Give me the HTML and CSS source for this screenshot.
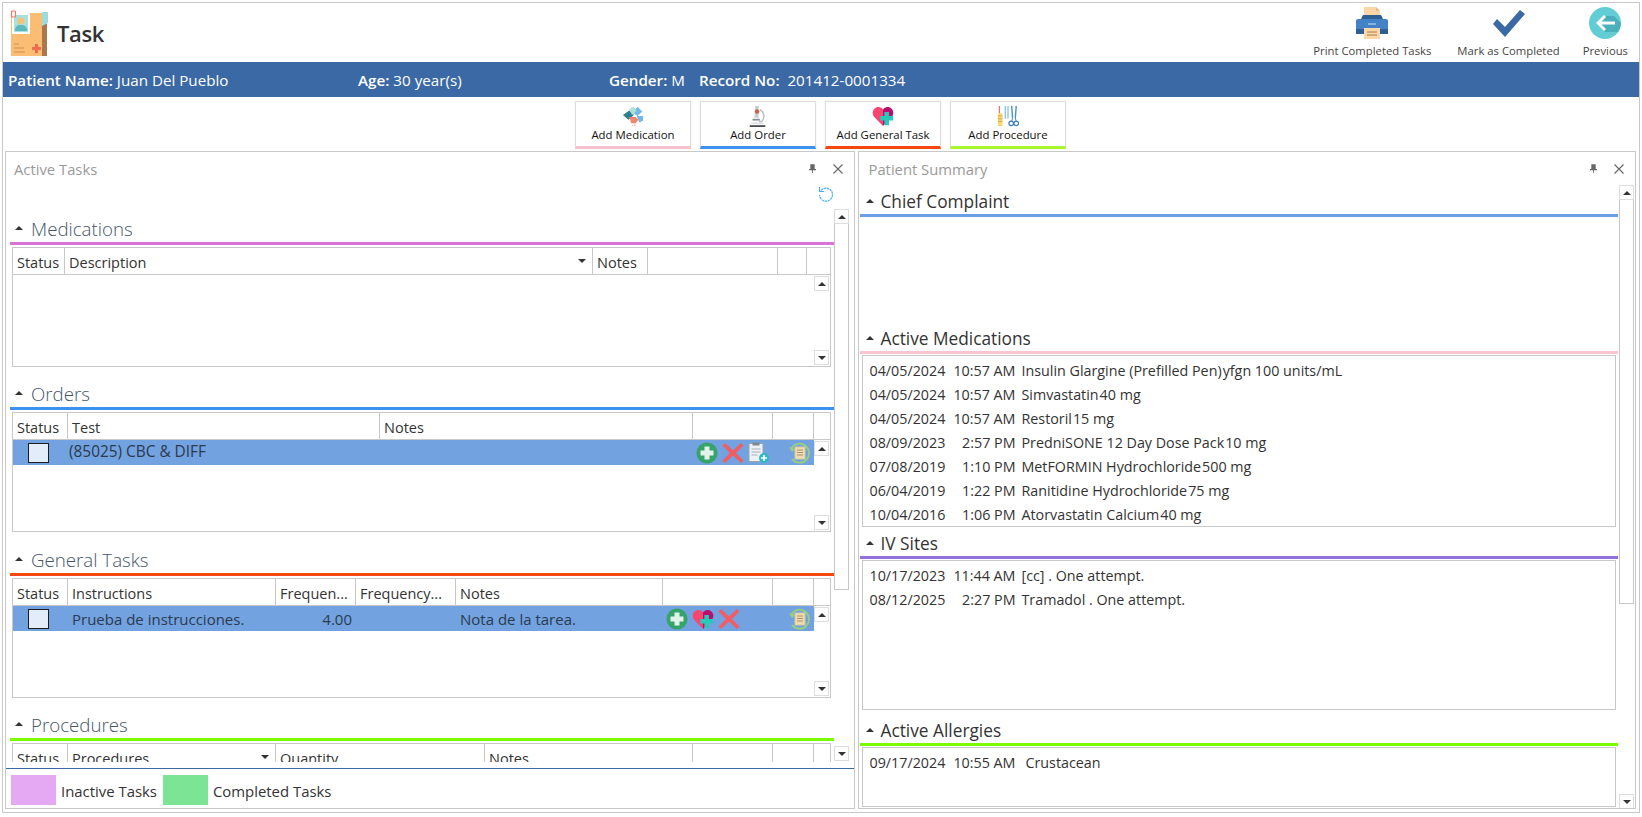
FILE: index.html
```html
<!DOCTYPE html>
<html lang="en">
<head>
<meta charset="utf-8">
<title>Task</title>
<link rel="stylesheet" href="styles.css">
</head>
<body>
<svg class="defs" width="0" height="0" aria-hidden="true">
  <defs>
    <symbol id="i-plus" viewBox="0 0 22 22">
      <circle cx="11" cy="11" r="10.500" fill="#35a36a"/>
      <path d="M8.500 4.500h5v4h4v5h-4v4h-5v-4h-4v-5h4z" fill="#e4f3ea"/>
    </symbol>
    <symbol id="i-x" viewBox="0 0 22 22">
      <path d="M3 1l8 7.500L19 1l2.500 2.500L14 11l7.500 7.500L19 21l-8-7.500L3 21 .5 18.500 8 11 .5 3.500z" fill="#f25c62"/>
    </symbol>
    <symbol id="i-clip" viewBox="0 0 22 22">
      <rect x="1" y="1.500" width="14" height="18" rx="1" fill="#eef1f5" stroke="#9aa3ad"/>
      <rect x="4.500" y=".5" width="7" height="3" fill="#7f8791"/>
      <path d="M3.500 7h9M3.500 10h9M3.500 13h6" stroke="#a7b0ba"/>
      <circle cx="16" cy="16" r="5" fill="#2fb9c4"/>
      <path d="M16 13v6M13 16h6" stroke="#fff" stroke-width="1.600"/>
    </symbol>
    <symbol id="i-hist" viewBox="0 0 22 22">
      <path d="M3 7a9.500 9.500 0 1 1 1 10" fill="none" stroke="#9bd07a" stroke-width="1.800"/>
      <path d="M1 5l3 5 3-3z" fill="#9bd07a"/>
      <rect x="7" y="5" width="10" height="12" fill="#f0dcae" stroke="#d8c9a5"/>
      <path d="M9 8h6M9 10.500h6M9 13h6" stroke="#a8946a"/>
    </symbol>
    <symbol id="i-heart" viewBox="0 0 24 24">
      <path d="M12 23L2.500 13C-.5 9.500.5 4 5 2.500c3-1 5.500 0 7 2.500z" fill="#f7466f"/>
      <path d="M12 23V5c1.500-2.500 4-3.500 7-2.500 4.500 1.500 5.500 7 2.500 10.500z" fill="#b80f6e"/>
      <path d="M13.500 7.500h5v4.500H23v5h-4.500v5h-5v-5H9v-5h4.500z" fill="#27c9b8"/>
    </symbol>
  </defs>
</svg>

<div class="app">
  <header class="topbar">
    <svg class="logo" viewBox="0 0 38 46" aria-hidden="true">
      <path d="M1 3h31v43H1z" fill="#fbbc74"/>
      <path d="M32 3h3v6l2-2v39h-5z" fill="#a9794b"/>
      <path d="M32 2h6v11l-6 3z" fill="#9fdcd8"/>
      <rect x="2" y="3" width="18" height="21" fill="#fff"/>
      <rect x="4" y="5" width="14" height="17" fill="#a8e0dd"/>
      <circle cx="11" cy="11" r="3.500" fill="#f3c27a"/>
      <path d="M5 21c0-5 2.500-6 6-6s6 1 6 6z" fill="#5cb8be"/>
      <rect x="1.500" y="1" width="4" height="6" rx="1" fill="#fff" stroke="#f2725e" stroke-width="1.200"/>
      <path d="M25 34h3v3h3v3h-3v3h-3v-3h-3v-3h3z" fill="#f26a50"/>
      <path d="M4 34h5M4 38h10M4 42h11" stroke="#c99355"/>
    </svg>
    <h1 class="title">Task</h1>
    <nav class="actions">
      <div class="action">
        <svg class="action-icon" viewBox="0 0 32 32" aria-hidden="true">
          <path d="M8 0h12l4 4v8H8z" fill="#fbd6a9"/>
          <path d="M20 0l4 4h-4z" fill="#e6bd8c"/>
          <path d="M7 8h18l2 4H5z" fill="#2d5f95"/>
          <path d="M2 12h28a2 2 0 0 1 2 2v11a2 2 0 0 1-2 2H2a2 2 0 0 1-2-2V14a2 2 0 0 1 2-2z" fill="#4482c6"/>
          <rect x="0" y="22" width="32" height="5" fill="#2d5f95"/>
          <path d="M8 21h16v11H8z" fill="#fbd6a9"/>
          <path d="M11 25h10M11 28h10" stroke="#a97f4d"/>
          <path d="M12 17h8" stroke="#cfe1f4"/>
        </svg>
        <span>Print Completed Tasks</span>
      </div>
      <div class="action">
        <svg class="action-icon" viewBox="0 0 32 32" aria-hidden="true">
          <path d="M0 17l4-5 8 8L27 3l5 4-20 23z" fill="#3a69a5"/>
        </svg>
        <span>Mark as Completed</span>
      </div>
      <div class="action action-prev">
        <svg class="action-icon" viewBox="0 0 32 32" aria-hidden="true">
          <circle cx="16" cy="16" r="16" fill="#63cdd6"/>
          <path d="M7 16l9 9h13a16 16 0 0 0 3-9l-7-7H16z" fill="#4bb0ba"/>
          <path d="M15 8l-8 8 8 8 2-2-4.500-4.500H26v-3H12.500L17 10z" fill="#fff"/>
        </svg>
        <span>Previous</span>
      </div>
    </nav>
  </header>

  <div class="patient">
    <div class="p-name"><b>Patient Name:</b> Juan Del Pueblo</div>
    <div class="p-age"><b>Age:</b> 30 year(s)</div>
    <div class="p-gender"><b>Gender:</b> M</div>
    <div class="p-rec"><b>Record No:</b>&nbsp; 201412-0001334</div>
  </div>

  <div class="adds">
    <button class="add add-pink" type="button">
      <svg class="add-icon" viewBox="0 0 24 24" aria-hidden="true">
        <path d="M11 8l6-6 5 5-5 5z" fill="#72b8e8"/>
        <path d="M1 11l7-5 5 5-6 5z" fill="#2e7f8f"/>
        <path d="M8 5l4-3 4 4-5 5z" fill="#a9e0d8"/>
        <path d="M8 13h7l3 3-3 4H10z" fill="#f3876d"/>
        <path d="M16 12h7v5l-4 2z" fill="#72b8e8"/>
        <path d="M14 21v2M11 22l1 1" stroke="#e79b85"/>
      </svg>
      <span>Add Medication</span>
    </button>
    <button class="add add-blue" type="button">
      <svg class="add-icon" viewBox="0 0 24 24" aria-hidden="true">
        <path d="M9 1h4v3h-1l1 10H8z" fill="#c9ccd2"/>
        <circle cx="11" cy="7" r="2.500" fill="#c4644f"/>
        <path d="M14 5a8 8 0 0 1 2 13h-3" fill="none" stroke="#b8bcc3" stroke-width="1.500"/>
        <path d="M6 15h8v2H6z" fill="#8a9099"/>
        <path d="M5 19h13v2H5z" fill="#dfe2e6"/>
        <path d="M3 22h17v2H3z" fill="#4b4f55"/>
      </svg>
      <span>Add Order</span>
    </button>
    <button class="add add-orange" type="button">
      <svg class="add-icon" aria-hidden="true"><use href="#i-heart"/></svg>
      <span>Add General Task</span>
    </button>
    <button class="add add-green" type="button">
      <svg class="add-icon" viewBox="0 0 24 24" aria-hidden="true">
        <path d="M2 1h1v8H2z" fill="#e8453c"/>
        <path d="M1 9h5v14H1z" fill="#f6d675"/>
        <path d="M1 12h5M1 15h5M1 18h5" stroke="#d8a93f"/>
        <path d="M9 1v14M12 1v14" stroke="#8cc8e8" stroke-width="1.500"/>
        <path d="M16 1l1 13M21 1l-1 13" stroke="#4a90c8" stroke-width="1.500"/>
        <circle cx="15.500" cy="20" r="2.500" fill="none" stroke="#3f7fb8" stroke-width="1.300"/>
        <circle cx="21" cy="20" r="2.500" fill="none" stroke="#3f7fb8" stroke-width="1.300"/>
        <path d="M17 14l-1 4M20 14l1 4" stroke="#3f7fb8"/>
      </svg>
      <span>Add Procedure</span>
    </button>
  </div>

  <main class="panels">
    <section class="panel panel-left">
      <div class="panel-head">
        <span class="panel-title">Active Tasks</span>
        <svg class="pin" viewBox="0 0 8 10" aria-hidden="true"><path d="M1.500 0h5v5.500H8V7H4.500v3h-1V7H0V5.500h1.500z" fill="#666"/></svg>
        <svg class="close" viewBox="0 0 10 10" aria-hidden="true"><path d="M.5.5l9 9M9.500.5l-9 9" stroke="#666" stroke-width="1.100"/></svg>
      </div>
      <div class="refresh-row">
        <svg class="refresh" viewBox="0 0 16 16" aria-hidden="true">
          <path d="M3 4.500A6.500 6.500 0 1 1 1.500 9" fill="none" stroke="#45b4ee" stroke-width="1.200" stroke-dasharray="2.500 .6"/>
          <path d="M1.500 1v4.500H6" fill="none" stroke="#45b4ee" stroke-width="1.200"/>
        </svg>
      </div>
      <div class="left-scroll">
        <div class="left-content">
          <div class="sec sec-first">
            <h2 class="sec-h"><i class="caret"></i>Medications</h2>
            <div class="rule rule-orchid"></div>
            <div class="grid">
              <div class="gh cols-med">
                <div>Status</div><div class="sorted">Description<i class="caret-down"></i></div><div>Notes</div><div></div><div></div><div></div>
              </div>
              <div class="gb">
                <div class="rows"></div>
                <div class="mini-sb"><span class="sb-btn"><i class="caret-s"></i></span><span class="sb-btn"><i class="caret-d"></i></span></div>
              </div>
            </div>
          </div>
          <div class="sec">
            <h2 class="sec-h"><i class="caret"></i>Orders</h2>
            <div class="rule rule-blue"></div>
            <div class="grid">
              <div class="gh cols-ord">
                <div>Status</div><div>Test</div><div>Notes</div><div></div><div></div><div></div>
              </div>
              <div class="gb">
                <div class="rows">
                  <div class="row row-ord">
                    <span class="chk"></span>
                    <span class="cell-test">(85025) CBC &amp; DIFF</span>
                    <span class="row-icons ic-ord">
                      <svg class="ic"><use href="#i-plus"/></svg>
                      <svg class="ic"><use href="#i-x"/></svg>
                      <svg class="ic"><use href="#i-clip"/></svg>
                    </span>
                    <svg class="ic ic-hist"><use href="#i-hist"/></svg>
                  </div>
                </div>
                <div class="mini-sb"><span class="sb-btn"><i class="caret-s"></i></span><span class="sb-btn"><i class="caret-d"></i></span></div>
              </div>
            </div>
          </div>
          <div class="sec sec-gen">
            <h2 class="sec-h"><i class="caret"></i>General Tasks</h2>
            <div class="rule rule-orange"></div>
            <div class="grid">
              <div class="gh cols-gen">
                <div>Status</div><div>Instructions</div><div>Frequen...</div><div>Frequency...</div><div>Notes</div><div></div><div></div><div></div>
              </div>
              <div class="gb">
                <div class="rows">
                  <div class="row row-gen">
                    <span class="chk"></span>
                    <span class="cell-ins">Prueba de instrucciones.</span>
                    <span class="cell-qty">4.00</span>
                    <span class="cell-note">Nota de la tarea.</span>
                    <span class="row-icons ic-gen">
                      <svg class="ic"><use href="#i-plus"/></svg>
                      <svg class="ic"><use href="#i-heart"/></svg>
                      <svg class="ic"><use href="#i-x"/></svg>
                    </span>
                    <svg class="ic ic-hist"><use href="#i-hist"/></svg>
                  </div>
                </div>
                <div class="mini-sb"><span class="sb-btn"><i class="caret-s"></i></span><span class="sb-btn"><i class="caret-d"></i></span></div>
              </div>
            </div>
          </div>
          <div class="sec">
            <h2 class="sec-h"><i class="caret"></i>Procedures</h2>
            <div class="rule rule-lime"></div>
            <div class="grid">
              <div class="gh cols-proc">
                <div>Status</div><div class="sorted">Procedures<i class="caret-down"></i></div><div>Quantity</div><div>Notes</div><div></div><div></div><div></div>
              </div>
            </div>
          </div>
        </div>
        <div class="vsb vsb-left">
          <span class="sb-btn"><i class="caret-s"></i></span>
          <span class="sb-thumb"></span>
          <span class="sb-btn"><i class="caret-d"></i></span>
        </div>
      </div>
      <footer class="legend">
        <span class="swatch swatch-inactive"></span><span class="legend-t">Inactive Tasks</span>
        <span class="swatch swatch-done"></span><span class="legend-t">Completed Tasks</span>
      </footer>
    </section>

    <section class="panel panel-right">
      <div class="panel-head panel-head-r">
        <span class="panel-title">Patient Summary</span>
        <svg class="pin" viewBox="0 0 8 10" aria-hidden="true"><path d="M1.500 0h5v5.500H8V7H4.500v3h-1V7H0V5.500h1.500z" fill="#666"/></svg>
        <svg class="close" viewBox="0 0 10 10" aria-hidden="true"><path d="M.5.5l9 9M9.500.5l-9 9" stroke="#666" stroke-width="1.100"/></svg>
      </div>
      <div class="right-scroll">
        <div class="right-content">
          <h2 class="sum-h sum-h-first"><i class="caret"></i>Chief Complaint</h2>
          <div class="rule rule-corn"></div>
          <div class="chief"></div>
          <h2 class="sum-h"><i class="caret"></i>Active Medications</h2>
          <div class="rule rule-pink"></div>
          <div class="box box-meds">
            <div class="li"><span class="d">04/05/2024</span><span class="t">10:57 AM</span><span class="v"><span>Insulin Glargine (Prefilled Pen)</span><span>yfgn 100 units/mL</span></span></div>
            <div class="li"><span class="d">04/05/2024</span><span class="t">10:57 AM</span><span class="v"><span>Simvastatin</span><span>40 mg</span></span></div>
            <div class="li"><span class="d">04/05/2024</span><span class="t">10:57 AM</span><span class="v"><span>Restoril</span><span>15 mg</span></span></div>
            <div class="li"><span class="d">08/09/2023</span><span class="t">2:57 PM</span><span class="v"><span>PredniSONE 12 Day Dose Pack</span><span>10 mg</span></span></div>
            <div class="li"><span class="d">07/08/2019</span><span class="t">1:10 PM</span><span class="v"><span>MetFORMIN Hydrochloride</span><span>500 mg</span></span></div>
            <div class="li"><span class="d">06/04/2019</span><span class="t">1:22 PM</span><span class="v"><span>Ranitidine Hydrochloride</span><span>75 mg</span></span></div>
            <div class="li"><span class="d">10/04/2016</span><span class="t">1:06 PM</span><span class="v"><span>Atorvastatin Calcium</span><span>40 mg</span></span></div>
          </div>
          <h2 class="sum-h sum-h-iv"><i class="caret"></i>IV Sites</h2>
          <div class="rule rule-purple"></div>
          <div class="box box-iv">
            <div class="li"><span class="d">10/17/2023</span><span class="t">11:44 AM</span><span class="v">[cc] . One attempt.</span></div>
            <div class="li"><span class="d">08/12/2025</span><span class="t">2:27 PM</span><span class="v">Tramadol . One attempt.</span></div>
          </div>
          <h2 class="sum-h sum-h-all"><i class="caret"></i>Active Allergies</h2>
          <div class="rule rule-lime"></div>
          <div class="box box-all">
            <div class="li li-all"><span class="d">09/17/2024</span><span class="t">10:55 AM</span><span class="v">Crustacean</span></div>
          </div>
        </div>
        <div class="vsb vsb-right">
          <span class="sb-btn"><i class="caret-s"></i></span>
          <span class="sb-thumb"></span>
          <span class="sb-btn"><i class="caret-d"></i></span>
        </div>
      </div>
    </section>
  </main>
</div>
</body>
</html>
```

FILE: styles.css
```css
* { box-sizing: border-box; }
html, body { margin: 0; padding: 0; height: 100%; overflow: hidden; background: #fff; }
body {
  font-family: "Open Sans", "Noto Sans", "Liberation Sans", sans-serif;
  color: #333;
  font-size: 13px;
  padding: 2px;
}
.defs { position: absolute; }
h1, h2 { margin: 0; font-weight: 400; }

.app {
  width: 1638px;
  height: 811px;
  border: 1px solid #c8c8c8;
  display: flex;
  flex-direction: column;
}

/* top bar */
.topbar { height: 59px; flex: none; display: flex; align-items: flex-start; padding-left: 7px; }
.logo { width: 38px; height: 46px; margin-top: 7px; flex: none; }
.title { font-size: 22px; line-height: 30px; margin: 15px 0 0 9px; font-weight: 600; color: #333; letter-spacing: -.4px; }
.actions { margin-left: auto; display: flex; gap: 26px; padding-right: 11px; padding-top: 4px; }
.action { display: flex; flex-direction: column; align-items: center; font-size: 11.300px; color: #444; white-space: nowrap; }
.action-prev { margin-left: -3px; }
.action-icon { width: 32px; height: 32px; display: block; margin-bottom: 4px; }
.action span { line-height: 16px; }

/* patient */
.patient { height: 35px; flex: none; background: #3a69a5; color: #fff; display: flex; align-items: center; padding-left: 5px; font-size: 15.200px; white-space: nowrap; }
.patient b { font-weight: 600; }
.p-name { width: 350px; }
.p-age { width: 251px; }
.p-gender { width: 90px; }

/* add buttons */
.adds { height: 54px; flex: none; padding: 4px 0 0 572px; display: flex; gap: 9px; }
.add {
  width: 116px; height: 48px; background: #fff; border: 1px solid #ddd; border-bottom-width: 3px;
  padding: 3px 0 0; font: inherit; font-size: 11.400px; color: #111;
  display: flex; flex-direction: column; align-items: center; box-shadow: 0 0 2px #eee;
}
.add span { line-height: 16px; white-space: nowrap; }
.add-icon { width: 22px; height: 22px; display: block; }
.add-pink { border-bottom-color: #f7c1d0; }
.add-blue { border-bottom-color: #3c92f0; }
.add-orange { border-bottom-color: #f5470f; }
.add-green { border-bottom-color: #a9f52e; }

/* panels */
.panels { flex: 1; min-height: 0; display: flex; gap: 3px; padding: 0 3px 3px 2px; }
.panel { border: 1px solid #c8c8c8; display: flex; flex-direction: column; min-height: 0; overflow: hidden; }
.panel-left { width: 851px; }
.panel-right { width: 778px; }
.panel-head { height: 31px; flex: none; display: flex; align-items: center; padding: 2px 11px 0 8px; }
.panel-head-r { height: 33px; padding: 0 11px 0 9px; }
.panel-title { font-size: 14.800px; color: #9a9a9a; flex: 1; }
.pin { width: 7px; height: 9px; margin-right: 17px; }
.close { width: 10px; height: 10px; }

.refresh-row { height: 26px; flex: none; display: flex; justify-content: flex-end; padding: 3px 20px 0 0; }
.refresh { width: 16px; height: 16px; }

.left-scroll { flex: 1; min-height: 0; display: flex; overflow: hidden; padding-left: 4px; }
.left-content { width: 824px; flex: none; overflow: hidden; }
.vsb { width: 15px; flex: none; display: flex; flex-direction: column; }
.vsb-left { height: 552px; }
.vsb-right { height: 624px; margin-top: 0; }
.sb-btn { height: 15px; flex: none; border: 1px solid #ddd; display: flex; align-items: center; justify-content: center; background: #fff; }
.sb-thumb { flex: none; border: 1px solid #c8c8c8; border-top: 0; }
.vsb-left .sb-thumb { height: 366px; margin-bottom: auto; }
.vsb-right .sb-thumb { height: 404px; margin-bottom: auto; }

.caret-s, .caret-d { display: block; width: 0; height: 0; border-left: 4px solid transparent; border-right: 4px solid transparent; }
.caret-s { border-bottom: 4px solid #333; }
.caret-d { border-top: 4px solid #333; }

/* sections */
.sec-first .sec-h { height: 33px; }
.sec-h { height: 40px; display: flex; align-items: flex-end; padding: 0 0 1px 21px; font-size: 18.700px; font-weight: 300; color: #45566a; line-height: 24px; position: relative; white-space: nowrap; }
.sec-gen .sec-h { height: 41px; }
.caret { position: absolute; left: 5px; bottom: 12px; width: 0; height: 0; border-left: 4px solid transparent; border-right: 4px solid transparent; border-bottom: 4px solid #333; }
.rule { height: 3px; }
.rule-orchid { background: #d874d8; }
.rule-blue { background: #3c92f0; }
.rule-orange { background: #f5470f; }
.rule-lime { background: #7cfc00; }
.rule-corn { background: #6a9fe8; }
.rule-pink { background: #f7c6d0; }
.rule-purple { background: #9370db; }

/* grids */
.grid { margin: 2px 3px 0 2px; height: 120px; border: 1px solid #c8c8c8; display: flex; flex-direction: column; }
.gh { height: 27px; flex: none; display: grid; border-bottom: 1px solid #c8c8c8; font-size: 14.500px; }
.gh > div { border-right: 1px solid #c8c8c8; padding: 5px 0 0 4px; line-height: 20px; white-space: nowrap; overflow: hidden; position: relative; }
.gh > div:last-child { border-right: 0; }
.cols-med { grid-template-columns: 52px 528px 55px 130px 29px 1fr; }
.cols-ord { grid-template-columns: 55px 312px 313px 80px 41px 1fr; }
.cols-gen { grid-template-columns: 55px 208px 80px 100px 207px 110px 41px 1fr; }
.cols-proc { grid-template-columns: 55px 208px 209px 208px 80px 41px 1fr; }
.sorted .caret-down { position: absolute; right: 6px; top: 11px; width: 0; height: 0; border-left: 4px solid transparent; border-right: 4px solid transparent; border-top: 4px solid #333; }
.gb { flex: 1; min-height: 0; display: flex; }
.rows { flex: 1; min-width: 0; }
.mini-sb { width: 16px; flex: none; display: flex; flex-direction: column; justify-content: space-between; padding: 1px 1px 1px 0; }
.row { height: 25px; background: #72a2e0; display: flex; align-items: center; position: relative; font-size: 15px; color: #2b3a4e; white-space: nowrap; }
.chk { width: 21px; height: 20px; margin-left: 15px; flex: none; background: #e3edf9; border: 1px solid #1c1c1c; }
.cell-test { margin: 0 0 3px 20px; font-size: 15.400px; }
.cell-ins { margin-left: 23px; width: 208px; }
.cell-qty { width: 72px; text-align: right; }
.cell-note { margin-left: 108px; }
.row-icons { display: flex; gap: 4px; position: absolute; top: 2px; }
.ic-ord { left: 683px; }
.ic-gen { left: 653px; }
.ic { width: 22px; height: 22px; display: block; flex: none; }
.ic-hist { position: absolute; right: 4px; top: 2px; }

/* legend */
.legend { flex: none; margin-top: 6px; border-top: 1px solid #3a69a5; height: 40px; display: flex; align-items: flex-start; padding: 6px 0 0 5px; }
.swatch { width: 45px; height: 30px; flex: none; }
.swatch-inactive { background: #e4a9f2; }
.swatch-done { background: #7be495; }
.legend-t { font-size: 14.900px; line-height: 32px; margin: 0 6px 0 5px; white-space: nowrap; }

/* right */
.right-scroll { flex: 1; min-height: 0; display: flex; overflow: hidden; padding-left: 1px; }
.right-content { width: 758px; flex: none; overflow: hidden; margin-right: 1px; }
.sum-h { height: 27px; position: relative; font-size: 17.300px; padding-left: 20px; line-height: 25px; color: #333; display: flex; align-items: flex-end; white-space: nowrap; }
.sum-h .caret { bottom: 11px; left: 6px; }
.sum-h-first { height: 29px; }
.sum-h-iv { height: 29px; }
.sum-h-all { height: 33px; }
.chief { height: 107px; }
.box { margin: 1px 2px 0; border: 1px solid #c8c8c8; padding-top: 2px; font-size: 14.300px; overflow: hidden; }
.box-meds { height: 172px; }
.box-iv { height: 150px; }
.box-all { height: 60px; }
.li { height: 24px; display: flex; align-items: center; white-space: nowrap; }
.d { width: 78px; margin-left: 6px; flex: none; }
.t { width: 68px; text-align: right; flex: none; white-space: pre; }
.v { margin-left: 6px; display: flex; gap: 1px; }
.li-all .v { margin-left: 10px; }
```
